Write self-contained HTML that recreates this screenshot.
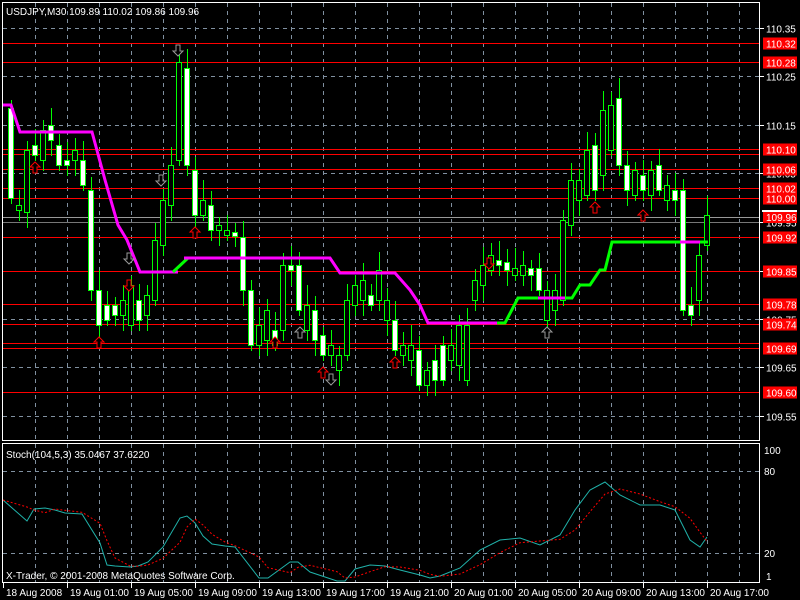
<!DOCTYPE html>
<html><head><meta charset="utf-8"><style>
html,body{margin:0;padding:0;background:#000;width:800px;height:600px;overflow:hidden}
svg{display:block}
text{font-family:"Liberation Sans",sans-serif;font-size:10px;fill:#fff}
</style></head><body>
<svg id="s" width="800" height="600" xmlns="http://www.w3.org/2000/svg">
<rect width="800" height="600" fill="#000"/>
<g id="grid"></g>
<g id="red"></g>
<g id="cand"></g>
<g id="ind"></g>
<g id="arr"></g>
<rect x="2.5" y="2.5" width="757" height="438" fill="none" stroke="#fff"/>
<rect x="2.5" y="443.5" width="757" height="139" fill="none" stroke="#fff"/>
<g id="lab"></g>
<text x="6" y="15">USDJPY,M30  109.89 110.02 109.86 109.96</text>
<text x="6" y="458">Stoch(104,5,3) 35.0467 37.6220</text>
<text x="6" y="579">X-Trader, © 2001-2008 MetaQuotes Software Corp.</text>
</svg>
<script>
var NS="http://www.w3.org/2000/svg";
function el(p,t,a,txt){var e=document.createElementNS(NS,t);for(var k in a)e.setAttribute(k,a[k]);if(txt!=null)e.textContent=txt;document.getElementById(p).appendChild(e);return e;}
function Y(p){return 28+(110.35-p)*485;}
// grid
for(var x=35;x<760;x+=32){el("grid","line",{x1:x+.5,y1:3,x2:x+.5,y2:440,stroke:"#8090a0","stroke-dasharray":"4 4"});el("grid","line",{x1:x+.5,y1:444,x2:x+.5,y2:582,stroke:"#8090a0","stroke-dasharray":"4 4"});}
[110.35,110.25,110.15,110.05,109.95,109.85,109.75,109.65,109.55].forEach(function(p){var y=Math.round(Y(p))+.5;el("grid","line",{x1:3,y1:y,x2:759,y2:y,stroke:"#8090a0","stroke-dasharray":"4 4"});el("lab","line",{x1:760,y1:y,x2:764,y2:y,stroke:"#fff"});el("lab","text",{x:766,y:y+4},p.toFixed(2));});
function sy(v){return 580.3-1.367*v;}
[80,20].forEach(function(v){var y=Math.round(sy(v))+.5;el("grid","line",{x1:3,y1:y,x2:759,y2:y,stroke:"#8090a0","stroke-dasharray":"4 4"});});
el("lab","text",{x:764,y:454},"100");el("lab","text",{x:764,y:475},"80");el("lab","text",{x:764,y:557},"20");el("lab","text",{x:766,y:580},"1");
el("grid","line",{x1:3,y1:217.5,x2:759,y2:217.5,stroke:"#999"});
el("grid","line",{x1:3,y1:222.5,x2:759,y2:222.5,stroke:"#777"});
// red lines
[[110.32,1],[110.28,1],[110.10,1],[110.09,0],[110.06,1],[110.02,1],[110.00,1],[109.92,1],[109.85,1],[109.78,1],[109.74,1],[109.70,0],[109.69,1],[109.60,1]].forEach(function(r){var y=Math.round(Y(r[0]))+.5;el("red","line",{x1:3,y1:y,x2:759,y2:y,stroke:"#f00"});if(r[1]){el("lab","rect",{x:763,y:y-6,width:34,height:12,fill:"#f00"});el("lab","text",{x:766,y:y+4},r[0].toFixed(2));}});
el("lab","rect",{x:763,y:211,width:34,height:12,fill:"#f00"});el("lab","text",{x:766,y:221},"109.96");
el("lab","line",{x1:762,y1:211,x2:797,y2:211,stroke:"#fff","stroke-width":2});
// candles [top,bottom,bull]
var c=[[108,198,0],[205,210,1],[150,212,1],[145,155,0],[130,160,1],[125,140,0],[145,165,0],[160,165,0],[150,160,1],[160,185,0],[190,290,0],[290,325,0],[305,320,0],[305,315,0],[300,315,1],[285,325,1],[300,320,0],[295,315,1],[240,300,1],[200,245,1],[165,205,1],[62,160,1],[68,165,0],[170,215,0],[200,215,1],[205,230,0],[225,230,1],[230,235,1],[232,236,0],[237,290,0],[290,345,0],[325,345,1],[310,340,1],[330,345,0],[265,330,1],[265,270,0],[265,310,0],[305,330,1],[310,340,0],[335,355,0],[345,355,1],[355,370,1],[300,355,1],[285,305,1],[280,300,1],[295,305,0],[270,300,1],[300,320,1],[320,350,0],[345,355,1],[345,360,1],[350,385,0],[370,385,1],[360,380,0],[345,380,0],[345,360,1],[325,365,1],[325,380,1],[280,300,1],[265,285,1],[255,270,1],[260,265,0],[262,270,0],[268,275,1],[265,275,1],[268,275,0],[268,290,0],[290,320,1],[290,310,1],[220,300,1],[180,225,1],[180,200,1],[150,195,1],[145,190,0],[110,175,1],[105,150,1],[98,165,0],[165,190,0],[170,195,1],[175,190,0],[170,195,1],[165,190,0],[185,200,1],[190,200,0],[190,310,0],[305,315,0],[255,300,1],[215,245,1]];
c.forEach(function(d,i){var x=11+i*8;var w1=d[0]-8-((i*7)%13),w2=d[1]+6+((i*5)%15);el("cand","line",{x1:x+.5,y1:w1,x2:x+.5,y2:w2,stroke:"#0f0"});el("cand","rect",{x:x-2.5,y:d[0]+.5,width:5,height:Math.max(1,d[1]-d[0]),fill:d[2]?"#000":"#fff",stroke:"#0f0"});});
// indicator
function pl(pts,col){el("ind","polyline",{points:pts,fill:"none",stroke:col,"stroke-width":3});}
pl("3,105 11,105 20,132 92,132 105,180 118,225 127,240 140,272 178,272","#f0f");
pl("173,272 188,258","#0f0");
pl("184,258 330,258 340,273 395,273 410,290 420,305 428,323 497,323","#f0f");
pl("497,323 505,323 518,298 540,298","#0f0");
pl("538,298 565,298","#f0f");
pl("565,298 572,298 580,285 590,285 600,270 605,270 612,242 680,242","#0f0");
pl("680,242 700,242","#f0f");pl("700,242 708,242","#0f0");
// arrows
function up(x,y,col){el("arr","path",{d:"M"+x+" "+y+" l-5 5 h3 v6 h4 v-6 h3 z",fill:"#000",stroke:col});}
function dn(x,y,col){el("arr","path",{d:"M"+x+" "+y+" l-5 -5 h3 v-6 h4 v6 h3 z",fill:"#000",stroke:col});}
up(35,162,"#f00");up(99,337,"#f00");up(195,227,"#f00");up(275,337,"#f00");up(323,367,"#f00");up(300,327,"#999");up(395,357,"#f00");up(595,202,"#f00");up(643,210,"#f00");up(547,327,"#999");
dn(178,56,"#999");dn(161,186,"#999");dn(129,264,"#999");dn(129,291,"#f00");dn(489,269,"#f00");dn(331,385,"#999");
// stoch
var m=[[3,500],[27,521],[34,509],[45,508],[55,510],[65,513],[82,514],[100,543],[107,565],[115,566],[130,567],[138,566],[148,562],[163,547],[180,518],[187,516],[195,523],[203,536],[212,544],[225,546],[235,547],[259,578],[268,578],[290,562],[298,562],[310,572],[337,581],[345,581],[355,569],[370,565],[385,566],[400,570],[420,575],[430,578],[440,576],[460,568],[480,550],[500,540],[520,538],[540,545],[560,535],[575,510],[590,490],[605,482],[620,495],[640,505],[660,505],[675,510],[690,540],[700,547],[707,537]];
el("ind","polyline",{points:m.map(function(p){return p.join(",")}).join(" "),fill:"none",stroke:"#20b2aa"});
var s=m.map(function(p,i){var a=m[Math.max(0,i-1)],b=m[Math.max(0,i-2)];return [p[0],((p[1]+a[1]+b[1])/3).toFixed(1)]});
el("ind","polyline",{points:s.map(function(p){return p.join(",")}).join(" "),fill:"none",stroke:"#f00","stroke-dasharray":"2 2"});
// time axis
var tl=["18 Aug 2008","19 Aug 01:00","19 Aug 05:00","19 Aug 09:00","19 Aug 13:00","19 Aug 17:00","19 Aug 21:00","20 Aug 01:00","20 Aug 05:00","20 Aug 09:00","20 Aug 13:00","20 Aug 17:00"];
tl.forEach(function(t,i){var x=i?67+(i-1)*64:3;el("lab","line",{x1:x+.5,y1:583,x2:x+.5,y2:588,stroke:"#fff"});el("lab","text",{x:x+3,y:596},t);});
</script>
</body></html>
